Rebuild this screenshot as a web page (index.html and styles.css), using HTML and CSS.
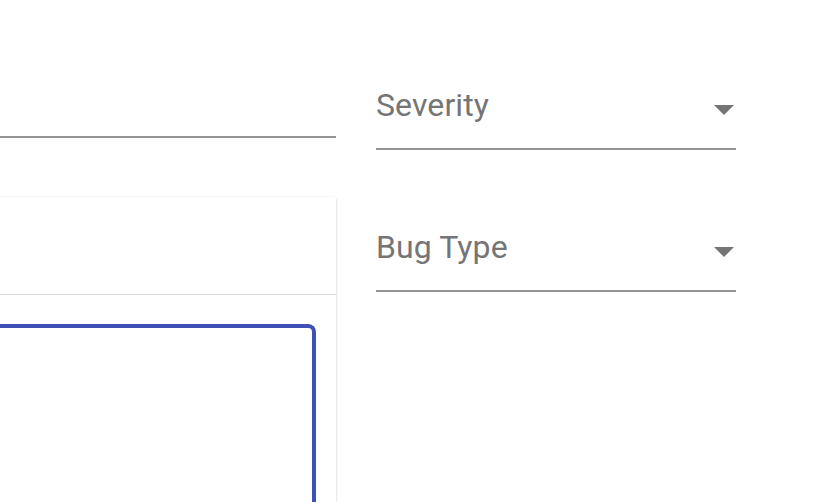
FILE: index.html
```html
<!DOCTYPE html>
<html lang="en">
<head>
<meta charset="utf-8">
<title>Bug report</title>
<link rel="stylesheet" href="styles.css">
</head>
<body>
<div class="page">
  <div class="left-col">
    <div class="field field-plain"><span class="field-value"></span></div>
    <div class="card">
      <div class="card-header"></div>
      <div class="card-body">
        <div class="editor"></div>
      </div>
    </div>
  </div>
  <div class="right-col">
    <div class="field select">
      <span class="field-label">Severity</span>
      <span class="arrow"></span>
    </div>
    <div class="field select second">
      <span class="field-label">Bug Type</span>
      <span class="arrow"></span>
    </div>
  </div>
</div>
</body>
</html>
```

FILE: styles.css
```css
html, body {
  margin: 0;
  padding: 0;
  background: #ffffff;
  overflow: hidden;
}
body {
  width: 836px;
  height: 502px;
  font-family: Roboto, "Noto Sans", "Liberation Sans", sans-serif;
}
.page {
  display: flex;
  gap: 40px;
  margin-left: -40px;
  height: 502px;
}
.left-col {
  width: 376px;
  padding-top: 74px;
  display: flex;
  flex-direction: column;
}
.right-col {
  width: 360px;
  padding-top: 86px;
  display: flex;
  flex-direction: column;
}
.field {
  display: flex;
  align-items: flex-start;
  justify-content: space-between;
  font-size: 32px;
  line-height: 38px;
  height: 38px;
  padding-bottom: 24px;
  border-bottom: 2px solid #949494;
  color: #757575;
}
.field.second {
  margin-top: 78px;
}
.field-label {
  letter-spacing: 0.1px;
}
.arrow {
  width: 0;
  height: 0;
  margin-top: 19px;
  margin-right: 2px;
  border-left: 10px solid transparent;
  border-right: 10px solid transparent;
  border-top: 10px solid #757575;
}
.card {
  margin-top: 59px;
  flex: 1;
  display: flex;
  flex-direction: column;
  background: #ffffff;
  box-shadow: 0 1px 3px rgba(0,0,0,0.2), 0 1px 1px rgba(0,0,0,0.12), 0 2px 1px -1px rgba(0,0,0,0.1);
  border-radius: 2px 2px 0 0;
}
.card-header {
  height: 97px;
  border-bottom: 1px solid #dcdcdc;
}
.card-body {
  flex: 1;
  display: flex;
  flex-direction: column;
  padding: 29px 20px 0 0;
}
.editor {
  flex: 1;
  border: 4px solid #3f51b5;
  border-bottom: none;
  border-radius: 8px 8px 0 0;
}
```
